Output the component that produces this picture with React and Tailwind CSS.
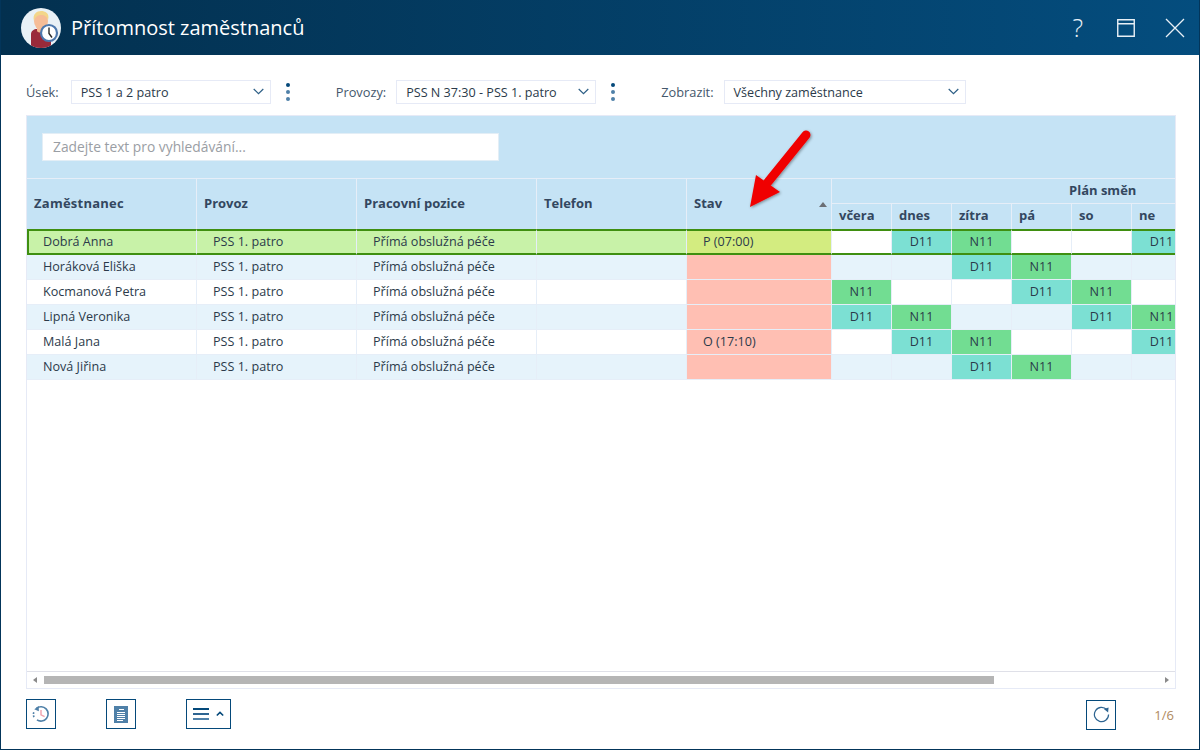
const rows = [
  { name: "Dobrá Anna", stav: "P (07:00)", plan: ["", "D11", "N11", "", "", "D11"], selected: true },
  { name: "Horáková Eliška", stav: "", plan: ["", "", "D11", "N11", "", ""] },
  { name: "Kocmanová Petra", stav: "", plan: ["N11", "", "", "D11", "N11", ""] },
  { name: "Lipná Veronika", stav: "", plan: ["D11", "N11", "", "", "D11", "N11"] },
  { name: "Malá Jana", stav: "O (17:10)", plan: ["", "D11", "N11", "", "", "D11"] },
  { name: "Nová Jiřina", stav: "", plan: ["", "", "D11", "N11", "", ""] },
];

const days = ["včera", "dnes", "zítra", "pá", "so", "ne"];

const Avatar = () => (
  <svg width="40" height="40" viewBox="0 0 40 40" className="shrink-0">
    <defs>
      <clipPath id="avatar-clip">
        <circle cx="20" cy="20" r="20" />
      </clipPath>
    </defs>
    <g clipPath="url(#avatar-clip)">
      <rect width="40" height="40" fill="#e9f1f6" />
      <path d="M10 40V26c0-3 3-5 6-5h8c3 0 6 2 6 5v14z" fill="#9a2a3a" />
      <path d="M16 17h8v6c-1 2-7 2-8 0z" fill="#f2b48c" />
      <ellipse cx="20" cy="13" rx="7" ry="9" fill="#f6bd97" />
      <path d="M13 13c-2-7 3-10 7-10s9 2 7 9c-1-3-3-5-7-5-3 0-6 2-7 6z" fill="#f3d68a" />
    </g>
    <circle cx="28" cy="25" r="8" fill="#fff" stroke="#4d78ad" strokeWidth="2.2" />
    <path d="M28 19.5v6l3 4" fill="none" stroke="#2a2a2a" strokeWidth="1.4" />
  </svg>
);

const Chevron = () => (
  <svg width="11" height="7" viewBox="0 0 11 7" className="shrink-0">
    <path d="M.7 1 5.5 5.6 10.3 1" fill="none" stroke="#2d5f86" strokeWidth="1.2" />
  </svg>
);

const Select = ({ value, width }) => (
  <div className={`flex h-[24px] items-center justify-between border border-[#e6eaf6] bg-white pl-[9px] pr-[6px] text-[12.6px] text-[#2b3a4a] ${width}`}>
    <span className="pt-[3px]">{value}</span>
    <Chevron />
  </div>
);

const Dots = () => (
  <div className="flex w-[6px] flex-col items-center gap-[3px] pt-[1px]">
    <span className="h-[4px] w-[4px] rounded-full bg-[#04497a]" />
    <span className="h-[4px] w-[4px] rounded-full bg-[#4f80a8]" />
    <span className="h-[4px] w-[4px] rounded-full bg-[#4f80a8]" />
  </div>
);

const HeaderCell = ({ children, className = "" }) => (
  <div className={`flex h-[50px] items-center border-r border-[#e6eef8] pl-[7px] text-[13px] font-bold text-[#33475f] ${className}`}>
    {children}
  </div>
);

const shiftColor = (shift) => {
  if (shift === "D11") return "bg-[#7ce0d3]";
  if (shift === "N11") return "bg-[#72dd92]";
  return "";
};

const Row = ({ row, index }) => {
  const zebra = index % 2 === 1 ? "bg-[#e6f3fb]" : "bg-white";
  const base = row.selected ? "bg-[#c8f2a8]" : zebra;
  const border = row.selected
    ? "h-[26px] border-y-2 border-y-[#3f8f10] border-r border-r-[#e6eef8]"
    : "h-[25px] border-b border-r border-[#e6eef8]";
  const cell = `flex items-center text-[12.6px] text-[#2b3a4a] ${border}`;
  const stavBg = row.selected ? "bg-[#d3ec80]" : "bg-[#ffbfb3]";
  const first = row.selected ? "border-l-2 border-l-[#3f8f10] pl-[14px]" : "pl-[16px]";

  return (
    <>
      <div className={`${cell} ${base} ${first}`}>{row.name}</div>
      <div className={`${cell} ${base} pl-[16px]`}>PSS 1. patro</div>
      <div className={`${cell} ${base} pl-[16px]`}>Přímá obslužná péče</div>
      <div className={`${cell} ${base}`} />
      <div className={`${cell} ${stavBg} pl-[16px]`}>{row.stav}</div>
      {row.plan.map((shift, i) => (
        <div key={i} className={`${cell} ${shift ? shiftColor(shift) : zebra} justify-center`}>
          {shift}
        </div>
      ))}
    </>
  );
};

const FooterButton = ({ children, className = "w-[30px]" }) => (
  <button className={`flex h-[30px] items-center justify-center border border-[#04497a] bg-white ${className}`}>
    {children}
  </button>
);

export default function App() {
  return (
    <div className="flex h-[750px] w-[1200px] flex-col overflow-hidden border border-t-0 border-[#03355a] bg-white font-['Open_Sans',sans-serif]">
      <header className="flex h-[55px] shrink-0 items-center justify-between bg-gradient-to-r from-[#03304f] to-[#044d7e] pl-[20px] pr-[14px]">
        <div className="flex items-center gap-[10px]">
          <Avatar />
          <h1 className="text-[20px] text-white">Přítomnost zaměstnanců</h1>
        </div>
        <div className="flex items-center">
          <span className="mr-[34px] text-[25px] font-light leading-none text-[#e8f0f6]">?</span>
          <svg width="18" height="18" viewBox="0 0 18 18" className="mr-[30px]">
            <path d="M.75.75h16.5v16.5H.75zM.75 4.75h16.5" fill="none" stroke="#e8f0f6" strokeWidth="1.4" />
          </svg>
          <svg width="20" height="20" viewBox="0 0 20 20">
            <path d="M1 1l18 18M19 1 1 19" fill="none" stroke="#e8f0f6" strokeWidth="1.3" />
          </svg>
        </div>
      </header>

      <div className="flex h-[60px] shrink-0 items-center pl-[25px] pb-[1px] pt-[14px] text-[12.8px] text-[#44576b]">
        <span className="mr-[12px] pt-[3px]">Úsek:</span>
        <Select value="PSS 1 a 2 patro" width="w-[200px]" />
        <div className="ml-[14px] mr-[45px]"><Dots /></div>
        <span className="mr-[10px] pt-[3px]">Provozy:</span>
        <Select value="PSS N 37:30 - PSS 1. patro" width="w-[200px]" />
        <div className="ml-[14px] mr-[45px]"><Dots /></div>
        <span className="mr-[10px] pt-[3px]">Zobrazit:</span>
        <Select value="Všechny zaměstnance" width="w-[242px]" />
      </div>

      <div className="relative ml-[25px] flex h-[574px] w-[1150px] flex-col overflow-hidden border border-[#e6eaf6]">
        <div className="flex h-[63px] shrink-0 items-center border-b border-[#e6eef8] bg-[#c5e3f5] pl-[15px]">
          <div className="flex h-[28px] w-[457px] items-center border border-[#e3eef6] bg-white pl-[10px] text-[13.8px] text-[#9a9ea4]">
            Zadejte text pro vyhledávání...
          </div>
        </div>

        <div className="min-h-0 flex-1 overflow-hidden">
          <div className="grid w-[1210px] grid-cols-[170px_160px_180px_150px_145px_60px_60px_60px_60px_60px_60px]">
            <div className="col-span-11 grid grid-cols-[170px_160px_180px_150px_145px_360px] bg-[#c5e3f5]">
              <HeaderCell className="tracking-[0.25px]">Zaměstnanec</HeaderCell>
              <HeaderCell>Provoz</HeaderCell>
              <HeaderCell>Pracovní pozice</HeaderCell>
              <HeaderCell>Telefon</HeaderCell>
              <div className="flex h-[50px] items-center justify-between border-r border-[#e6eef8] pl-[7px] pr-[4px] text-[13px] font-bold text-[#33475f]">
                <span>Stav</span>
                <span className="h-0 w-0 border-x-[4px] border-b-[5px] border-x-transparent border-b-[#6b6f75]" />
              </div>
              <div className="flex flex-col">
                <div className="flex h-[25px] items-center border-b border-[#e6eef8] pl-[237px] text-[13px] font-bold text-[#33475f]">
                  Plán směn
                </div>
                <div className="grid h-[25px] grid-cols-[60px_60px_60px_60px_60px_60px]">
                  {days.map((day) => (
                    <div key={day} className="flex items-center border-r border-[#e6eef8] pb-[2px] pl-[7px] text-[13px] font-bold text-[#33475f]">
                      {day}
                    </div>
                  ))}
                </div>
              </div>
            </div>
            {rows.map((row, index) => (
              <Row key={row.name} row={row} index={index} />
            ))}
          </div>
        </div>

        <div className="flex h-[17px] shrink-0 items-center border-t border-[#dfe0e8] bg-white px-[6px]">
          <span className="h-0 w-0 border-y-[3px] border-r-[4px] border-y-transparent border-r-[#8a8a8a]" />
          <div className="ml-[7px] h-[8px] w-[950px] bg-[#b5b5b5]" />
          <span className="ml-auto h-0 w-0 border-y-[3px] border-l-[4px] border-y-transparent border-l-[#8a8a8a]" />
        </div>

        {/* arrow drawn on top of the header */}
        <svg width="80" height="100" viewBox="0 0 80 100" className="pointer-events-none absolute left-[715px] top-[10px]">
          <defs>
            <filter id="arrow-shadow" x="-20%" y="-20%" width="140%" height="140%">
              <feDropShadow dx="1" dy="1" stdDeviation="1.5" floodColor="#000" floodOpacity="0.4" />
            </filter>
          </defs>
          <g filter="url(#arrow-shadow)">
            <path d="M64 9 26 56" stroke="#f00000" strokeWidth="9" strokeLinecap="round" fill="none" />
            <path d="M8 81 14 49 38 66z" fill="#f00000" />
          </g>
        </svg>
      </div>

      <footer className="flex min-h-0 flex-1 items-start justify-between pl-[25px] pr-[25px] pt-[10px]">
        <div className="flex gap-[50px]">
          <FooterButton>
            <svg width="18" height="18" viewBox="0 0 20 20">
              <path d="M5 3.6A8 8 0 1 1 5.5 16.6" fill="none" stroke="#4f80a8" strokeWidth="1.8" />
              <path d="M2.2 13.5a8 8 0 0 1-.2-5.5" fill="none" stroke="#4f80a8" strokeWidth="1.8" strokeDasharray="2 1.5" />
              <path d="M2.5 4.8 7.6 1v6z" fill="#4f80a8" />
              <path d="M10 5.5v5.5l4 2" fill="none" stroke="#f2a3ad" strokeWidth="1.6" />
            </svg>
          </FooterButton>
          <FooterButton>
            <svg width="14" height="17" viewBox="0 0 14 17">
              <rect width="14" height="17" fill="#4f80a8" />
              <path d="M5 3.5h5M3 6.5h8M3 8.5h8M3 10.5h8M3 12.5h8M3 14.5h6" stroke="#fff" strokeWidth="1" />
            </svg>
          </FooterButton>
          <FooterButton className="w-[45px] gap-[7px]">
            <span className="flex flex-col gap-[3px]">
              <span className="h-[2px] w-[16px] bg-[#04497a]" />
              <span className="h-[2px] w-[16px] bg-[#2d6491]" />
              <span className="h-[2px] w-[16px] bg-[#4f80a8]" />
            </span>
            <svg width="8" height="6" viewBox="0 0 8 6">
              <path d="M.8 4.5 4 1.4l3.2 3.1" fill="none" stroke="#04497a" strokeWidth="1.6" />
            </svg>
          </FooterButton>
        </div>
        <div className="flex items-center">
          <FooterButton>
            <svg width="17" height="17" viewBox="0 0 18 18">
              <path d="M14.6 4A7.5 7.5 0 1 0 16.5 9" fill="none" stroke="#2d6491" strokeWidth="1.3" />
              <path d="M11.5 3.2 16.5 1.5 16 7z" fill="#2d6491" />
            </svg>
          </FooterButton>
          <span className="ml-[38px] mt-[1px] text-[13px] leading-[30px] text-[#b08a60]">1/6</span>
        </div>
      </footer>
    </div>
  );
}
